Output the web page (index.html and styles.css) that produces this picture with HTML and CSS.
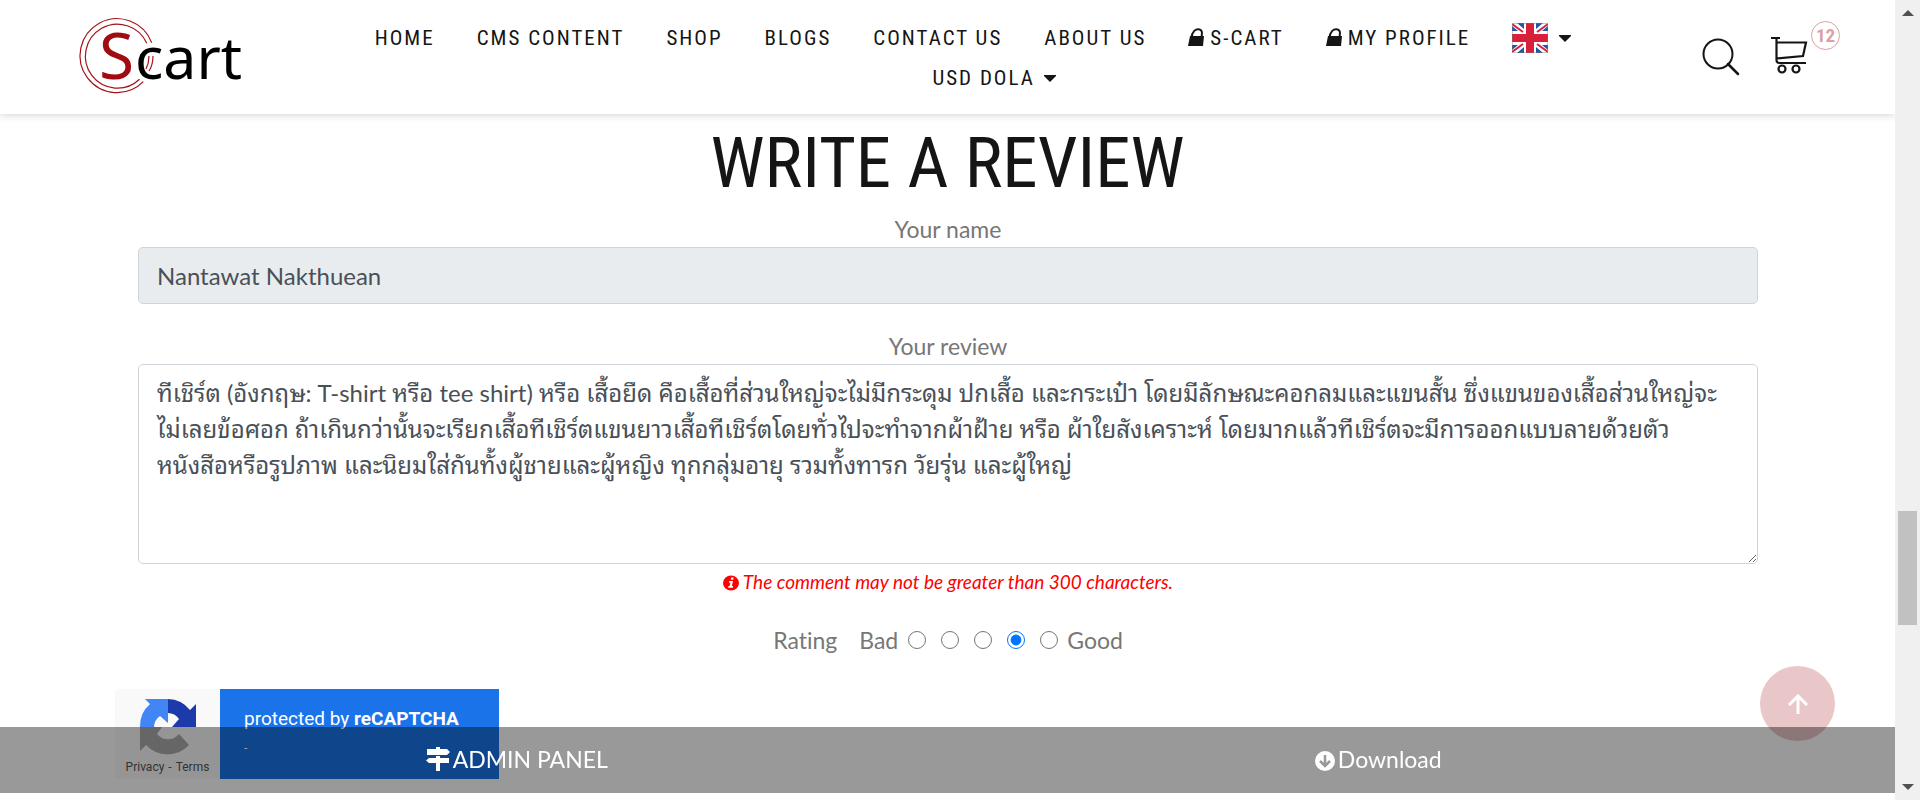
FILE: index.html
```html
<!DOCTYPE html>
<html lang="en">
<head>
<meta charset="utf-8">
<title>Scart – Write a review</title>
<meta name="viewport" content="width=device-width, initial-scale=1">
<link rel="stylesheet" href="styles.css">
</head>
<body>
<div class="page">
  <header class="header">
    <a class="logo" href="#" aria-label="Scart">
      <svg viewBox="0 0 164 76" width="164" height="76">
        <g fill="none" stroke="#a51219" stroke-width="1.200">
          <path d="M71.700 24.700A37 37 0 1 0 63.300 63.700"/>
          <path d="M66.700 25.300A32 32 0 1 0 59.500 61.300"/>
          <path d="M69 38q0 7-3 13M73 38q0 9-4 15"/>
        </g>
        <text class="logo-s" x="19" y="61">S</text>
        <text class="logo-rest" x="55" y="61">cart</text>
      </svg>
    </a>
    <nav class="nav" aria-label="Main">
      <a href="#">HOME</a>
      <a href="#">CMS CONTENT</a>
      <a href="#">SHOP</a>
      <a href="#">BLOGS</a>
      <a href="#">CONTACT US</a>
      <a href="#">ABOUT US</a>
      <a href="#"><svg class="lock" viewBox="0 0 16 18" width="16" height="18"><path d="M2 8h14l-1 10H0z" fill="#151515"/><path d="M3.500 10C4 3 8 1 10.500 1.200C14 1.500 14.500 4 13.500 9" fill="none" stroke="#151515" stroke-width="2"/></svg>S-CART</a>
      <a href="#"><svg class="lock" viewBox="0 0 16 18" width="16" height="18"><path d="M2 8h14l-1 10H0z" fill="#151515"/><path d="M3.500 10C4 3 8 1 10.500 1.200C14 1.500 14.500 4 13.500 9" fill="none" stroke="#151515" stroke-width="2"/></svg>MY PROFILE</a>
      <a href="#" class="flag" aria-label="English">
        <svg viewBox="0 0 36 30" width="36" height="30"><path fill="#fff" d="M0 0h36v30H0z"/><path fill="#2456a6" d="M5 0h7v6zM31 0h-7v6zM5 30h7v-6zM31 30h-7v-6zM0 3v5h6zM36 3v5h-6zM0 27v-5h6zM36 27v-5h-6z"/><path d="M0 1l11 8M36 1L25 9M0 29l11-8M36 29l-11-8" stroke="#d8203a" stroke-width="2"/><path d="M18 0v30M0 15h36" stroke="#d8203a" stroke-width="8"/><path d="M.5.5h35v29H.5z" fill="none" stroke="#777" stroke-opacity=".4"/></svg>
        <svg class="caret" viewBox="0 0 12 7" width="12" height="7"><path d="M0 0h12v1L6 7 0 1z" fill="#151515"/></svg>
      </a>
      <a href="#">USD DOLA <svg class="caret" viewBox="0 0 12 7" width="12" height="7"><path d="M0 0h12v1L6 7 0 1z" fill="#151515"/></svg></a>
    </nav>
    <div class="tools">
      <button type="button" aria-label="Search"><svg viewBox="0 0 38 38" width="38" height="38" fill="none" stroke="#151515" stroke-width="2"><circle cx="16" cy="16" r="14.500"/><path d="M26 26l10 10" stroke-width="2.500" stroke-linecap="round"/></svg></button>
      <a class="cart" href="#" aria-label="Cart, 12 items"><svg viewBox="0 0 38 38" width="38" height="38" fill="none" stroke="#151515" stroke-width="2.200"><path d="M1 2h9M6.500 2v22q0 3 3 3H36M6.500 6.500H36L33 20 6.500 22.500"/><circle cx="12" cy="33" r="3.500"/><circle cx="26" cy="33" r="3.500"/></svg><span class="badge">12</span></a>
    </div>
  </header>

  <main class="main">
    <h1>WRITE A REVIEW</h1>
    <form class="form">
      <label for="name">Your name</label>
      <input class="control" id="name" type="text" value="Nantawat Nakthuean" readonly>
      <label class="next" for="review">Your review</label>
      <textarea class="control" id="review" spellcheck="false">ทีเชิร์ต (อังกฤษ: T-shirt หรือ tee shirt) หรือ เสื้อยืด คือเสื้อที่ส่วนใหญ่จะไม่มีกระดุม ปกเสื้อ และกระเป๋า โดยมีลักษณะคอกลมและแขนสั้น ซึ่งแขนของเสื้อส่วนใหญ่จะ
ไม่เลยข้อศอก ถ้าเกินกว่านั้นจะเรียกเสื้อทีเชิร์ตแขนยาวเสื้อทีเชิร์ตโดยทั่วไปจะทำจากผ้าฝ้าย หรือ ผ้าใยสังเคราะห์ โดยมากแล้วทีเชิร์ตจะมีการออกแบบลายด้วยตัว
หนังสือหรือรูปภาพ และนิยมใส่กันทั้งผู้ชายและผู้หญิง ทุกกลุ่มอายุ รวมทั้งทารก วัยรุ่น และผู้ใหญ่</textarea>
      <p class="error"><svg viewBox="0 0 16 16" width="16" height="16"><ellipse cx="8" cy="8" rx="8" ry="7.500" fill="#f00"/><path d="M8.200 2.500h2.500l-.5 2.300H7.700zM6.300 6h3.700l-1.100 5h1.200l-.3 1.700H5.200l.3-1.700h1.200l.7-3.300H6z" fill="#fff"/></svg> The comment may not be greater than 300 characters.</p>
      <div class="rating" role="radiogroup" aria-labelledby="rating-title">
        <span class="rating-title" id="rating-title">Rating</span>
        <span>Bad</span>
        <input type="radio" name="r" aria-label="1">
        <input type="radio" name="r" aria-label="2">
        <input type="radio" name="r" aria-label="3">
        <input type="radio" name="r" aria-label="4" checked>
        <input type="radio" name="r" aria-label="5">
        <span>Good</span>
      </div>
    </form>
    <aside class="captcha">
      <div class="captcha-mark">
        <svg viewBox="0 0 58 58" width="58" height="58"><path fill="#1c3aa9" d="M57 29V6l-6 6A29 29 0 0 0 29 1v14a14 14 0 0 1 11 6l-7 8z"/><path fill="#4285f4" d="M29 1H6l5 5A29 29 0 0 0 1 29h14a14 14 0 0 1 6-11l8 7z"/><path fill="#ababab" d="M1 29v24l6-6a29 29 0 0 0 43 0L40 36a14 14 0 0 1-22 0l5-7z"/></svg>
        <p><a href="#">Privacy</a><span>-</span><a href="#">Terms</a></p>
      </div>
      <div class="captcha-text"><p>protected by <b>reCAPTCHA</b></p><small>-</small></div>
    </aside>
  </main>

  <a class="to-top" href="#" aria-label="Back to top"><svg viewBox="0 0 20 20" width="20" height="20" fill="none" stroke="#fff" stroke-width="3"><path d="M10 20V2M1 11l9-9 9 9"/></svg></a>
  <footer class="bar">
    <a href="#"><svg viewBox="0 0 24 24" width="24" height="24" fill="#fff"><path d="M10 0h4v2h7l3 3-3 3H1V2h9zM10 9h4v2h9v5h-9v8h-4v-8H3l-3-2.500L3 11h7z"/></svg>ADMIN PANEL</a>
    <a href="#"><svg viewBox="0 0 20 20" width="20" height="20"><circle cx="10" cy="10" r="10" fill="#fff"/><path d="M10 4v11M5 10l5 5 5-5" fill="none" stroke="#999" stroke-width="2.500"/></svg>Download</a>
  </footer>
</div>
<div class="scroll" aria-hidden="true">
  <svg viewBox="0 0 12 6" width="12" height="6"><path d="M6 0l6 6H0z" fill="#505050"/></svg>
  <div class="track"><div class="thumb"></div></div>
  <svg viewBox="0 0 12 6" width="12" height="6"><path d="M0 0h12L6 6z" fill="#505050"/></svg>
</div>
</body>
</html>
```

FILE: styles.css
```css
* { box-sizing: border-box; }
body {
  margin: 0;
  min-height: 100vh;
  display: grid;
  grid-template-columns: minmax(0, 1fr) 25px;
  background: #fff;
  color: #777;
  font: 23px/36px Lato, "Noto Sans Thai Looped", Loma, Waree, Garuda, "Noto Sans Thai", sans-serif;
  font-variant-ligatures: none;
}
a { color: inherit; text-decoration: none; }
p, h1 { margin: 0; }
.page { position: relative; }

.header {
  display: grid;
  grid-template-columns: 164px minmax(0, 1fr) 138px;
  min-height: 114px;
  padding: 0 55px 0 80px;
  box-shadow: 0 1px 8px rgba(0, 0, 0, .18);
}
.logo { padding-top: 18px; }
.logo svg { display: block; overflow: visible; }
.logo text { font-family: "Noto Sans", sans-serif; }
.logo-s { font-size: 64px; fill: #a00c12; }
.logo-rest { font-size: 59px; fill: #000; }
.nav {
  display: flex;
  flex-wrap: wrap;
  justify-content: center;
  align-content: flex-start;
  padding: 18px 86px 0;
  color: #151515;
  font: 21px/40px "Roboto Condensed", "Liberation Sans Narrow", sans-serif;
  letter-spacing: 2px;
}
.nav a { white-space: nowrap; }
.nav a + a { margin-left: 42px; }
.lock { margin-right: 6px; vertical-align: -1px; }
.flag { display: flex; align-items: center; gap: 9px; }
.caret { margin-left: 2px; vertical-align: 3px; }
.tools { display: flex; justify-content: space-between; align-items: flex-start; padding-top: 38px; }
.tools button { display: block; padding: 0; border: 0; background: none; }
.tools svg { display: block; }
.cart { position: relative; padding-right: 32px; margin-top: -2px; }
.badge {
  position: absolute;
  top: -15px;
  right: 0;
  width: 29px;
  height: 29px;
  border: 1px solid #dda0a0;
  border-radius: 50%;
  color: #dda0a0;
  font: bold 19px/28px "Roboto Condensed", "Liberation Sans Narrow", sans-serif;
  text-align: center;
}

.main { padding: 9px 115px 0; }
h1 {
  color: #151515;
  font: 71px/80px "Roboto Condensed", "Liberation Sans Narrow", sans-serif;
  text-align: center;
}
.form { display: flex; flex-direction: column; padding: 8px 22px 0 23px; text-align: center; }
.next { margin-top: 24px; }
.control {
  display: block;
  width: 100%;
  padding: 10px 18px;
  border: 1px solid #ced4da;
  border-radius: 5px;
  background: #fff;
  color: #495057;
  font: inherit;
  font-size: 24px;
}
input.control { height: 57px; background: #e9ecef; }
textarea.control { height: 200px; resize: vertical; }
.error { color: #f00; font-size: 19px; font-style: italic; line-height: 36px; }
.error svg { vertical-align: -2px; }
.rating {
  display: flex;
  justify-content: center;
  align-items: center;
  margin-top: 22px;
}
.rating input { width: 18px; height: 18px; margin: 0 5px 0 10px; accent-color: #0075ff; }
.rating input + input { margin-left: 10px; }
.rating span:last-child { margin-left: 4px; }
.rating-title { margin-right: 22px; }

.captcha { display: flex; width: 384px; height: 90px; margin-top: 31px; font-family: Roboto, sans-serif; }
.captcha-mark { flex: 0 0 105px; padding-top: 9px; border-radius: 4px 0 0 4px; background: #f9f9f9; text-align: center; }
.captcha-mark svg { display: block; margin: 0 auto; }
.captcha-mark p { display: flex; justify-content: center; gap: 4px; color: #555; font-size: 12px; line-height: 22px; }
.captcha-text { flex: 1; padding: 18px 24px; background: #1a73e8; color: #fff; }
.captcha-text p { font-size: 19px; line-height: 24px; }
.captcha-text small { display: block; font-size: 12px; line-height: 34px; }

.to-top {
  position: fixed;
  right: 85px;
  bottom: 59px;
  display: grid;
  place-items: center;
  width: 75px;
  height: 75px;
  border-radius: 50%;
  background: rgba(201, 113, 118, .4);
}
.bar {
  position: fixed;
  left: 0;
  right: 25px;
  bottom: 7px;
  display: grid;
  grid-template-columns: 1fr 1fr;
  padding: 14px 86px 16px;
  background: rgba(0, 0, 0, .4);
  color: #fff;
  text-align: center;
}
.bar svg { margin-right: 3px; vertical-align: -3px; }
.scroll {
  position: sticky;
  top: 0;
  display: flex;
  flex-direction: column;
  align-items: center;
  height: 100vh;
  padding: 10px 0;
  background: #f0f0f0;
}
.track { flex: 1; display: flex; flex-direction: column; padding-top: 495px; }
.thumb { width: 19px; height: 114px; background: #c1c1c1; }
```
